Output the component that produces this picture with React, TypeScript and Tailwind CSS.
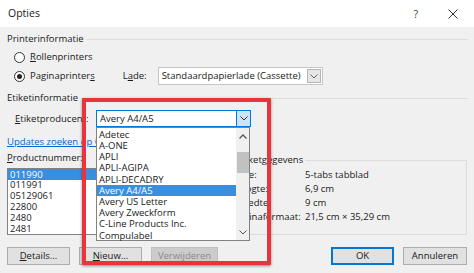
import React from "react";

const font = { fontFamily: '"Open Sans", "Noto Sans", sans-serif' };

function Chevron({ className = "" }: { className?: string }) {
  return (
    <svg width="8" height="5" viewBox="0 0 8 5" className={className}>
      <path d="M0.5 0.5 L4 4 L7.5 0.5" fill="none" stroke="currentColor" strokeWidth="1" />
    </svg>
  );
}

function ChevronUp({ className = "" }: { className?: string }) {
  return (
    <svg width="8" height="5" viewBox="0 0 8 5" className={className}>
      <path d="M0.5 4.5 L4 1 L7.5 4.5" fill="none" stroke="currentColor" strokeWidth="1.3" />
    </svg>
  );
}

function Radio({ checked }: { checked?: boolean }) {
  return (
    <span className="w-[11px] h-[11px] rounded-full border border-[#333] bg-white flex items-center justify-center">
      {checked && <span className="w-[5px] h-[5px] rounded-full bg-[#222]" />}
    </span>
  );
}

function GroupHeader({ label }: { label: string }) {
  return (
    <div className="h-[16px] flex items-center">
      <span className="text-[#1a1a1a] pr-[3px]">{label}</span>
      <div className="flex-1 h-px bg-[#dcdcdc] mr-[6px]" />
    </div>
  );
}

function Btn({ children, className = "" }: { children: React.ReactNode; className?: string }) {
  return (
    <div className={"h-[18px] flex items-center justify-center border bg-[#e1e1e1] border-[#adadad] text-[#1a1a1a] " + className}>
      {children}
    </div>
  );
}

const manufacturers = [
  "Adetec",
  "A-ONE",
  "APLI",
  "APLI-AGIPA",
  "APLI-DECADRY",
  "Avery A4/A5",
  "Avery US Letter",
  "Avery Zweckform",
  "C-Line Products Inc.",
  "Compulabel",
];

const products = ["011990", "011991", "05129061", "22800", "2480", "2481"];

export default function App() {
  return (
    <div
      className="relative w-[474px] h-[273px] overflow-hidden bg-[#f0f0f0] text-[9.5px] leading-none text-[#1a1a1a]"
      style={font}
    >
      {/* Title bar */}
      <div className="h-[27px] bg-white flex items-center pl-[8px]">
        <span className="text-[10.5px] text-[#1a1a1a]">Opties</span>
        <span className="ml-auto text-[10px] text-[#333] mr-[30px]">?</span>
        <svg width="10" height="10" viewBox="0 0 10 10" className="mr-[16px]">
          <path d="M0.5 0.5 L9.5 9.5 M9.5 0.5 L0.5 9.5" stroke="#333" strokeWidth="1" />
        </svg>
      </div>

      <div className="pl-[7px] pt-[4px]">
        <GroupHeader label="Printerinformatie" />
        <div className="h-[20px] flex items-center pl-[7px] gap-[5px]">
          <Radio />
          <span>
            <span className="underline">R</span>ollenprinters
          </span>
        </div>
        <div className="h-[18px] flex items-center pl-[7px]">
          <Radio checked />
          <span className="ml-[5px]">
            Paginaprinter<span className="underline">s</span>
          </span>
          <span className="ml-[28px]">
            L<span className="underline">a</span>de:
          </span>
          <div className="ml-[11px] w-[165px] h-[18px] bg-white border border-[#c6c6c6] flex items-center pl-[3px]">
            <span>Standaardpapierlade (Cassette)</span>
            <div className="ml-auto mr-[1px] w-[14px] h-[14px] border border-[#b5b5b5] bg-[#e6e6e6] flex items-center justify-center text-[#666]">
              <Chevron />
            </div>
          </div>
        </div>
        <div className="mt-[5px]">
          <GroupHeader label="Etiketinformatie" />
        </div>
        <div className="mt-[4px] h-[17px] flex items-center pl-[8px]">
          <span className="w-[81px]">
            <span className="underline">E</span>tiketproducent:
          </span>
          <div className="w-[155px] h-[17px] bg-white border border-[#0078d7] flex items-center pl-[3px]">
            <span>Avery A4/A5</span>
            <div className="ml-auto w-[14px] h-[15px] border-l border-[#0078d7] bg-[#cce4f7] flex items-center justify-center text-[#333]">
              <Chevron />
            </div>
          </div>
        </div>
        <div className="mt-[8px] h-[14px] flex items-center">
          <span className="text-[#0066cc] underline">Updates zoeken op Office.com</span>
        </div>

        <div className="mt-[2px] h-[84px] flex items-start">
          <div className="w-[213px] h-[84px] flex flex-col shrink-0">
            <div className="h-[14px] shrink-0 flex items-center">
              <span>
                <span className="underline">P</span>roductnummer:
              </span>
            </div>
            <div className="mt-[3px] h-[67px] shrink-0 overflow-hidden bg-white border border-[#828282]">
              {products.map((p, i) => (
                <div
                  key={p}
                  className={
                    "h-[10.8px] flex items-center pl-[2px] " +
                    (i === 0 ? "bg-[#3a8ee0] text-white" : "")
                  }
                >
                  {p}
                </div>
              ))}
            </div>
          </div>
          <fieldset className="ml-[7px] w-[240px] mt-[3px] h-[81px] border border-[#dcdcdc] px-[5px] pb-0">
            <legend className="px-[2px] ml-[2px] leading-[12px]">Etiketgegevens</legend>
            <div className="grid grid-cols-[72px_1fr] auto-rows-[13.8px] items-center mt-[2px]">
              <span>Type:</span>
              <span>5-tabs tabblad</span>
              <span>Hoogte:</span>
              <span>6,9 cm</span>
              <span>Breedte:</span>
              <span>9 cm</span>
              <span>Paginaformaat:</span>
              <span>21,5 cm × 35,29 cm</span>
            </div>
          </fieldset>
        </div>

        <div className="mt-[12px] flex items-center gap-[9px]">
          <Btn className="w-[63px]">
            <span>
              <span className="underline">D</span>etails...
            </span>
          </Btn>
          <Btn className="w-[63px]">
            <span>
              <span className="underline">N</span>ieuw...
            </span>
          </Btn>
          <div className="w-[67px] h-[18px] flex items-center justify-center bg-[#cccccc] border border-[#bfbfbf] text-[#8a8a8a]">
            Verwijderen
          </div>
          <div className="ml-auto w-[63px] h-[18px] flex items-center justify-center bg-[#e1e1e1] border-2 border-[#0078d7]">
            OK
          </div>
          <Btn className="w-[64px] mr-[7px]">Annuleren</Btn>
        </div>
      </div>

      {/* Dropdown list overlay */}
      <div className="absolute left-[96px] top-[127px] w-[154px] h-[114px] bg-white border border-[#828282] flex">
        <div className="flex-1 pt-[1px]">
          {manufacturers.map((m) => (
            <div
              key={m}
              className={
                "h-[11.2px] flex items-center pl-[2px] " +
                (m === "Avery A4/A5" ? "bg-[#3a8ee0] text-white" : "")
              }
            >
              {m}
            </div>
          ))}
        </div>
        <div className="w-[13px] bg-[#f0f0f0] flex flex-col items-center">
          <div className="h-[16px] flex items-center justify-center text-[#555]">
            <ChevronUp />
          </div>
          <div className="w-[12px] h-[21px] mt-[8px] bg-[#c1c1c1]" />
          <div className="mt-auto h-[16px] flex items-center justify-center text-[#555]">
            <Chevron />
          </div>
        </div>
      </div>

      {/* Red highlight rectangle */}
      <div className="absolute left-[82px] top-[98px] w-[189px] h-[167px] border-[4px] border-[#e8343a] rounded-[1px] shadow-[0_1px_3px_rgba(0,0,0,0.45)] pointer-events-none" />
    </div>
  );
}
